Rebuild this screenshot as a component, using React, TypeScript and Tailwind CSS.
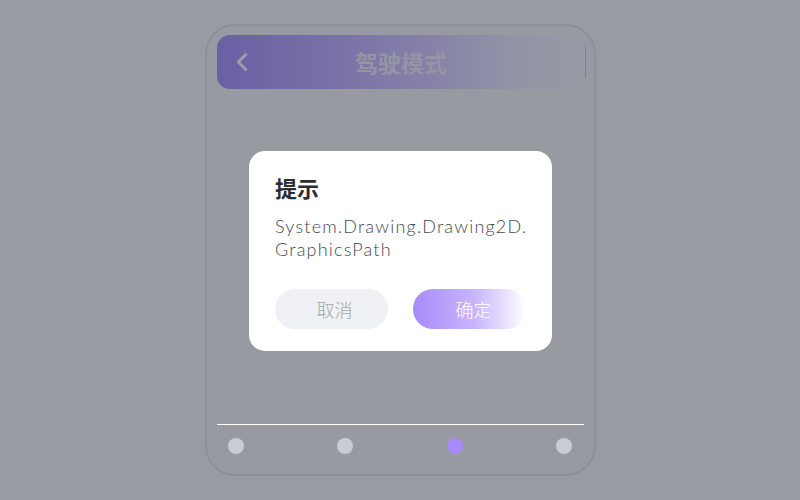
import { ChevronLeft } from 'lucide-react'

const dots = [false, false, true, false]

export default function App() {
  return (
    <div className="relative flex h-[500px] w-[800px] justify-center overflow-hidden bg-[#989ba1] pt-[24px] font-['Lato','Noto_Sans_CJK_SC',sans-serif]">
      <div className="flex h-[452px] w-[391px] flex-col rounded-[30px] border-2 border-[#8d9097] bg-[#979aa0] pl-[10px] pr-[8px] pt-[9px]">
        <div className="relative flex h-[54px] items-center justify-center rounded-[13px] bg-[linear-gradient(to_right,#6a5fa4,#766da6_25%,#8480a8_55%,#9194a6_80%,#989aa4)]">
          <ChevronLeft className="absolute left-[10px] h-[30px] w-[30px] text-[#9c9eaa]" strokeWidth={2.3} />
          <span className="text-[23px] font-bold text-[#9395a5] font-['Noto_Sans_CJK_SC',sans-serif]">驾驶模式</span>
          <div className="absolute right-0 top-[10px] h-[33px] w-px bg-[#7e8191]" />
        </div>
        <div className="flex-1" />
        <div className="mr-[2px] h-px bg-white" />
        <div className="flex h-[42px] items-center justify-between pl-[11px] pr-[13px]">
          {dots.map((on, i) => (
            <div key={i} className={on ? 'h-4 w-4 rounded-full bg-[#a78bfa]' : 'h-4 w-4 rounded-full bg-[#c9ccd3]'} />
          ))}
        </div>
        <div className="h-[7px]" />
      </div>

      <div className="absolute left-[249px] top-[151px] w-[303px] rounded-[16px] bg-white px-[26px] pb-[22px] pt-[21px]">
        <div className="text-[22px] font-bold leading-[30px] text-[#2b2d33] font-['Noto_Sans_CJK_SC',sans-serif]">提示</div>
        <p className="mt-[13px] whitespace-nowrap text-[18px] font-light leading-[23px] tracking-[1.2px] text-[#45484e]">
          System.Drawing.Drawing2D.
          <br />
          GraphicsPath
        </p>
        <div className="mt-[28px] flex gap-[25px]">
          <button className="h-[40px] w-[115px] rounded-full bg-[#f0f1f4] pl-[6px] text-[18px] font-light text-[#a3a6ac] font-['Noto_Sans_CJK_SC',sans-serif]">取消</button>
          <button className="h-[40px] w-[115px] rounded-full bg-[linear-gradient(to_right,#a78bfa,#c8b6fc_55%,#ffffff)] pl-[8px] text-[18px] font-light text-white font-['Noto_Sans_CJK_SC',sans-serif]">确定</button>
        </div>
      </div>
    </div>
  )
}
